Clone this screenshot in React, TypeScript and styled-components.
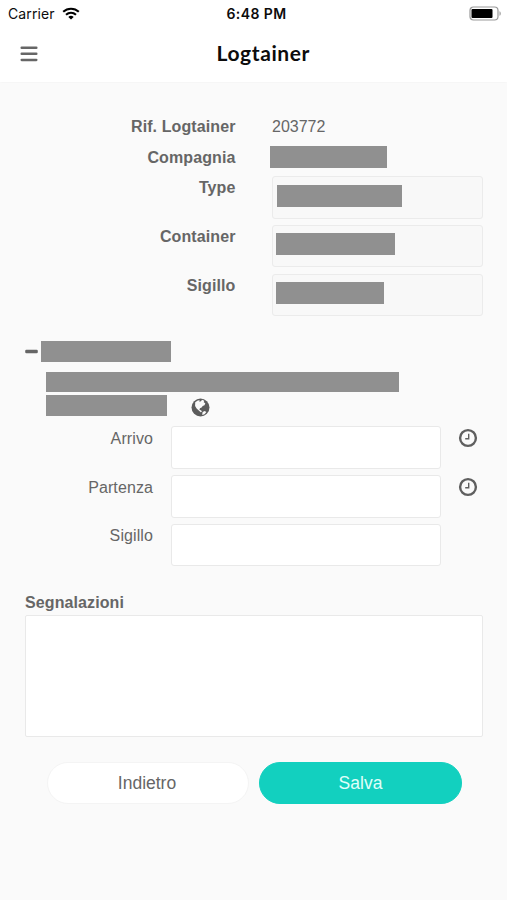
import React from "react";
import styled, { createGlobalStyle } from "styled-components";

const GlobalStyle = createGlobalStyle`
  *, *::before, *::after { box-sizing: border-box; }
  body {
    margin: 0;
    background: #fafafa;
    color: #666;
    font: 16px/30px "Liberation Sans", Arial, sans-serif;
  }
  button, input, textarea { font: inherit; color: inherit; }
`;

const Screen = styled.div`
  width: 507px;
  height: 900px;
  overflow: hidden;
  background: #fafafa;
`;

const TopBar = styled.header`
  height: 82px;
  background: #fff;
  box-shadow: 0 0 2px rgba(0, 0, 0, 0.05);
  color: #0c0c0c;
`;

const StatusBar = styled.div`
  display: grid;
  grid-template-columns: 1fr auto 1fr;
  align-items: center;
  height: 27px;
  padding: 0 5px 0 8px;
  font: 14px/27px Inter, sans-serif;
`;

const Carrier = styled.div`
  display: flex;
  align-items: center;
  gap: 7px;
  letter-spacing: 0.1px;
`;

const Clock = styled.div`
  padding-left: 3px;
  font-weight: 600;
  font-size: 14px;
  letter-spacing: 0.4px;
`;

const Battery = styled.div`
  display: flex;
  justify-content: flex-end;
`;

const NavBar = styled.div`
  display: grid;
  grid-template-columns: 36px 1fr 36px;
  align-items: center;
  height: 54px;
  padding: 0 20px;
`;

const MenuButton = styled.button`
  display: flex;
  padding: 0;
  border: 0;
  background: none;
`;

const Title = styled.h1`
  margin: 0 0 3px 20px;
  width: 94px;
  justify-self: center;
  font: 700 21px/30px Lato, sans-serif;
  letter-spacing: 0.6px;
  white-space: nowrap;
`;

const Form = styled.main`
  padding: 29px 25px 0;
`;

const SummaryRow = styled.div<{ $tall?: boolean }>`
  display: grid;
  grid-template-columns: 210.5px 210.5px;
  column-gap: 36.5px;
  height: ${(p) => (p.$tall ? "48.9px" : "30.5px")};
`;

const Label = styled.label<{ $bold?: boolean }>`
  padding-top: 1px;
  text-align: right;
  font-weight: ${(p) => (p.$bold ? 700 : 400)};
  letter-spacing: 0.1px;
`;

const Value = styled.span`
  padding-top: 1px;
`;

const Redacted = styled.span<{ $w: number; $h?: number }>`
  display: block;
  flex: none;
  width: ${(p) => p.$w}px;
  height: ${(p) => p.$h ?? 22}px;
  background: #909090;
`;

const CompanyValue = styled.div`
  margin: 4px 0 0 -2px;
`;

const ReadOnlyField = styled.div<{ $inset: number }>`
  height: 42.5px;
  margin-top: 4px;
  padding: 7.5px 0 0 ${(p) => p.$inset}px;
  border: 1px solid #ebebeb;
  border-radius: 3px;
  background: #f8f8f8;
`;

const StopHeader = styled.div`
  display: flex;
  align-items: center;
  gap: 3px;
  height: 21px;
  margin-top: 22px;
`;

const StopAddress = styled.div`
  display: flex;
  flex-direction: column;
  gap: 3px;
  padding: 10px 0 0 21px;
`;

const AddressLine = styled.div`
  display: flex;
  align-items: center;
  gap: 24px;
  height: 21px;

  svg { margin-top: 4px; }
`;

const StopRow = styled.div`
  display: grid;
  grid-template-columns: 128px 270px 20px;
  column-gap: 18.4px;
  height: 48.8px;
`;

const TextInput = styled.input`
  width: 270px;
  height: 42.5px;
  margin-top: 3.5px;
  padding: 0 8px;
  border: 1px solid #e9e9e9;
  border-radius: 3px;
  background: #fff;
`;

const TimeButton = styled.button`
  display: flex;
  height: 20px;
  margin: 5px 0 0 -1.5px;
  padding: 0;
  border: 0;
  background: none;
`;

const StopFields = styled.div`
  padding-top: 6.7px;
`;

const NotesLabel = styled.label`
  display: block;
  height: 28px;
  margin-top: 18px;
  padding-top: 0.5px;
  font-weight: 700;
  letter-spacing: 0.1px;
`;

const Notes = styled.textarea`
  display: block;
  width: 457.5px;
  height: 122px;
  padding: 8px;
  border: 1px solid #e9e9e9;
  border-radius: 2px;
  background: #fff;
  resize: none;
`;

const Actions = styled.div`
  display: grid;
  grid-template-columns: 202px 203px;
  column-gap: 10px;
  padding: 24.3px 0 0 22px;
`;

const ActionButton = styled.button<{ $primary?: boolean }>`
  height: 42.5px;
  padding: 0 ${(p) => (p.$primary ? 0 : 2)}px 0 0;
  border: 1px solid ${(p) => (p.$primary ? "#12d0bf" : "#f4f4f4")};
  border-radius: 22px;
  background: ${(p) => (p.$primary ? "#12d0bf" : "#fff")};
  color: ${(p) => (p.$primary ? "#e0fffa" : "#666")};
  font-size: 17.5px;
`;

const WifiIcon = () => (
  <svg width="18" height="13" viewBox="0 0 18 13" fill="none" stroke="#000" strokeWidth="2.1">
    <path d="M1.2 4.8C5.6.7 12.4.7 16.8 4.8" />
    <path d="M4 7.8c2.9-2.6 7.1-2.6 10 0" />
    <path d="M6.3 9.9c1.6-1.4 3.8-1.4 5.4 0L9 12.6Z" fill="#000" stroke="none" />
  </svg>
);

const BatteryIcon = () => (
  <svg width="33" height="15" viewBox="0 0 33 15">
    <rect x="1" y="1" width="28" height="13" rx="3.5" fill="#fff" stroke="#999" strokeWidth="1.2" />
    <rect x="2.5" y="3" width="21" height="9" rx="1" fill="#000" />
    <path d="M30.5 5.2c1.7.6 1.7 4 0 4.6Z" fill="#999" />
  </svg>
);

const MenuIcon = () => (
  <svg width="18" height="16" viewBox="0 0 18 16" fill="#666">
    <rect x="0.5" y="0.5" width="17" height="2.5" rx="1.1" />
    <rect x="0.5" y="6.6" width="17" height="2.5" rx="1.1" />
    <rect x="0.5" y="12.7" width="17" height="2.5" rx="1.1" />
  </svg>
);

const MinusIcon = () => (
  <svg width="13" height="5" viewBox="0 0 13 5">
    <rect x="0.2" y="0.7" width="12.6" height="3.6" rx="1.2" fill="#666" />
  </svg>
);

const GlobeIcon = () => (
  <svg width="19" height="19" viewBox="0 0 19 19">
    <circle cx="9.5" cy="9.5" r="9" fill="#5c5c5c" />
    <path
      d="M4.2 4.3 6.8 2.5 8.7 2.2 8.3 3.8 10 3.2 11 1.8 13.3 2.7 12.7 4.3 14.3 5.3 13.5 7.2 11.7 7.9 10.6 9.4 8.9 10.2 8.5 11.9 10.1 12.2 10.9 13.7 9.7 14.3 7.8 12.5 5.6 10.6 4.1 7.9Z"
      fill="#fafafa"
    />
    <path d="m11.6 13.9 2-.8 1.8.8-1.9 2.3-2.3.8Z" fill="#fafafa" />
  </svg>
);

const ClockIcon = () => (
  <svg width="20" height="20" viewBox="0 0 20 20" fill="none" stroke="#5f5f5f">
    <circle cx="10" cy="10" r="7.9" strokeWidth="2.4" />
    <path d="M10.7 5.8v5H7.2" strokeWidth="1.4" />
  </svg>
);

const fields = [
  { label: "Type", width: 125, inset: 4 },
  { label: "Container", width: 118.5, inset: 3 },
  { label: "Sigillo", width: 108, inset: 2.5 },
];

const stopFields = [
  { id: "arrivo", label: "Arrivo", timed: true },
  { id: "partenza", label: "Partenza", timed: true },
  { id: "sigillo", label: "Sigillo", timed: false },
];

export default function App() {
  return (
    <Screen>
      <GlobalStyle />
      <TopBar>
        <StatusBar>
          <Carrier>
            Carrier
            <WifiIcon />
          </Carrier>
          <Clock>6:48 PM</Clock>
          <Battery>
            <BatteryIcon />
          </Battery>
        </StatusBar>
        <NavBar>
          <MenuButton aria-label="Menu">
            <MenuIcon />
          </MenuButton>
          <Title>Logtainer</Title>
        </NavBar>
      </TopBar>
      <Form>
        <SummaryRow>
          <Label $bold>Rif. Logtainer</Label>
          <Value>203772</Value>
        </SummaryRow>
        <SummaryRow>
          <Label $bold>Compagnia</Label>
          <CompanyValue>
            <Redacted $w={116.5} />
          </CompanyValue>
        </SummaryRow>
        {fields.map((f) => (
          <SummaryRow key={f.label} $tall>
            <Label $bold>{f.label}</Label>
            <ReadOnlyField $inset={f.inset}>
              <Redacted $w={f.width} />
            </ReadOnlyField>
          </SummaryRow>
        ))}
        <StopHeader>
          <MinusIcon />
          <Redacted $w={130} $h={21} />
        </StopHeader>
        <StopAddress>
          <Redacted $w={353} $h={20.5} />
          <AddressLine>
            <Redacted $w={121} $h={21.5} />
            <GlobeIcon />
          </AddressLine>
        </StopAddress>
        <StopFields>
          {stopFields.map((f) => (
            <StopRow key={f.id}>
              <Label htmlFor={f.id}>{f.label}</Label>
              <TextInput id={f.id} />
              {f.timed && (
                <TimeButton aria-label={f.label}>
                  <ClockIcon />
                </TimeButton>
              )}
            </StopRow>
          ))}
        </StopFields>
        <NotesLabel htmlFor="note">Segnalazioni</NotesLabel>
        <Notes id="note" />
        <Actions>
          <ActionButton>Indietro</ActionButton>
          <ActionButton $primary>Salva</ActionButton>
        </Actions>
      </Form>
    </Screen>
  );
}
